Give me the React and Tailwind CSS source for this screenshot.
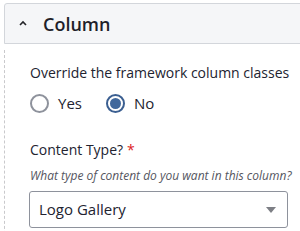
import React from 'react';

function Radio({ label, checked }) {
    return (
        <label className="flex items-center gap-[9px]">
            {checked ? (
                <span className="flex h-[19px] w-[19px] items-center justify-center rounded-full border-[2px] border-[#3b5f91]">
                    <span className="h-[11px] w-[11px] rounded-full bg-[#41689c]"></span>
                </span>
            ) : (
                <span className="h-[19px] w-[19px] rounded-full border-[2px] border-[#8e929c] bg-white"></span>
            )}
            <span className="text-[15px] leading-[20px] text-[#222330]">{label}</span>
        </label>
    );
}

export default function App() {
    return (
        <div className="h-[231px] w-[300px] overflow-hidden bg-white pl-[4px] pt-[3px] font-['Open_Sans',sans-serif]">
            <div className="flex h-[41px] w-[320px] items-center rounded-tl-[3px] border border-[#d3d6db] bg-[#f5f6f8] pl-[14px]">
                <svg width="8" height="6" viewBox="0 0 8 6" className="mt-[-1px]">
                    <path d="M1 5 L4 2 L7 5" fill="none" stroke="#232429" strokeWidth="1.6" />
                </svg>
                <span className="ml-[16px] text-[18px] font-semibold leading-none text-[#1f1f2a]">Column</span>
            </div>

            <div className="mt-[6px] border-l border-dashed border-[#c9c9cc] pb-4 pl-[25px] pt-[13px]">
                <div className="text-[14px] leading-[20px] text-[#222330]">Override the framework column classes</div>
                <div className="mt-[10px] flex items-center gap-[24px]">
                    <Radio label="Yes" />
                    <Radio label="No" checked />
                </div>

                <div className="mt-[27px] flex items-center text-[14px] leading-[20px] text-[#222330]">
                    Content Type?
                    <span className="ml-[4px] text-[#dc2323]">*</span>
                </div>
                <div className="mt-[8px] text-[12px] italic leading-[16px] text-[#545560]">
                    What type of content do you want in this column?
                </div>
                <div className="ml-[-1px] mt-[7px] flex h-[37px] w-[259px] items-center justify-between rounded-[3px] border border-[#8e929c] pl-[9px] pr-[11px]">
                    <span className="text-[15px] text-[#222330]">Logo Gallery</span>
                    <svg width="10" height="6" viewBox="0 0 10 6">
                        <path d="M0 0 L10 0 L5 6 Z" fill="#7d7f85" />
                    </svg>
                </div>
            </div>
        </div>
    );
}
